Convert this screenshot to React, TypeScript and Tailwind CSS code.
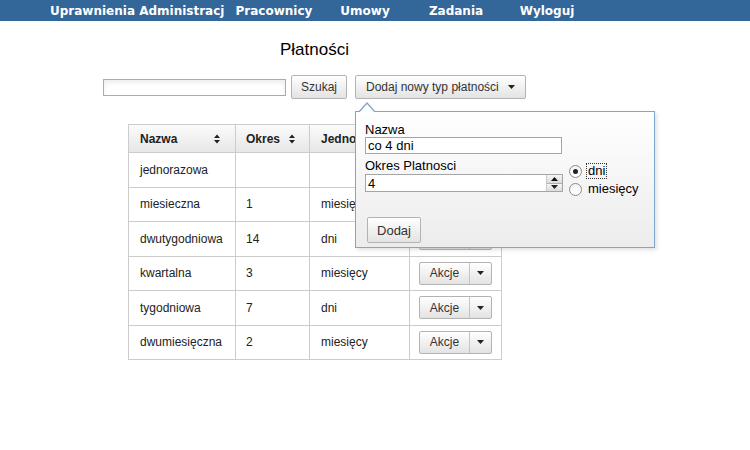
import React from "react";

const rows = [
  { name: "jednorazowa", okres: "", unit: "" },
  { name: "miesieczna", okres: "1", unit: "miesięcy" },
  { name: "dwutygodniowa", okres: "14", unit: "dni" },
  { name: "kwartalna", okres: "3", unit: "miesięcy" },
  { name: "tygodniowa", okres: "7", unit: "dni" },
  { name: "dwumiesięczna", okres: "2", unit: "miesięcy" },
];

const navItems = ["Pracownicy", "Umowy", "Zadania", "Wyloguj"];

const btnClass =
  "border border-[#b3b3b3] rounded-[2px] bg-linear-to-b from-white to-[#e3e3e3] text-[#333] text-[12px] leading-none";

const Caret = () => (
  <svg width="7" height="4" viewBox="0 0 7 4">
    <polygon points="0,0 7,0 3.5,4" fill="#222" />
  </svg>
);

const SortIcon = () => (
  <svg width="6" height="10" viewBox="0 0 6 10">
    <polygon points="0,4 6,4 3,0.5" fill="#222" />
    <polygon points="0,6 6,6 3,9.5" fill="#222" />
  </svg>
);

const Radio = ({ checked }: { checked?: boolean }) => (
  <span className="w-[13px] h-[13px] rounded-full border border-[#8a8a8a] bg-linear-to-b from-[#f4f4f4] to-white flex items-center justify-center shrink-0">
    {checked && <span className="w-[5px] h-[5px] rounded-full bg-[#222]" />}
  </span>
);

const AkcjeBtn = () => (
  <div className={`${btnClass} flex h-[23px] w-[73px]`}>
    <div className="w-[50px] flex items-center justify-center text-[12px] border-r border-[#c4c4c4]">
      Akcje
    </div>
    <div className="flex-1 flex items-center justify-center">
      <Caret />
    </div>
  </div>
);

const Popover = () => (
  <div className="absolute left-0 top-[36px] w-[300px] h-[137px] border border-[#7ea6cf] bg-linear-to-b from-white to-[#ececec] shadow-[2px_2px_4px_rgba(0,0,0,0.12)] z-10 pl-[9px] pt-[10px] text-[13px] text-black font-['Liberation_Sans',Arial,sans-serif] text-left">
    {/* arrow pointing at the button */}
    <div className="absolute -top-[10px] left-[2px] w-0 h-0 border-x-[9px] border-x-transparent border-b-[10px] border-b-[#7ea6cf]" />
    <div className="absolute -top-[8px] left-[3px] w-0 h-0 border-x-[8px] border-x-transparent border-b-[9px] border-b-white" />
    <div className="flex">
      <div className="flex flex-col w-[198px]">
        <div className="leading-[15px]">Nazwa</div>
        <div className="h-[17px] w-[197px] border border-[#a5a5a5] bg-white flex items-center pl-[2px] leading-none">
          co 4 dni
        </div>
        <div className="leading-[15px] mt-[4px]">Okres Platnosci</div>
        <div className="h-[18px] w-[198px] border border-[#a5a5a5] bg-white flex items-center pl-[2px] leading-none mt-[1px]">
          <span className="flex-1">4</span>
          <div className="flex flex-col w-[16px] h-[16px] border-l border-[#c8c8c8]">
            <div className="flex-1 flex items-center justify-center bg-linear-to-b from-[#f6f6f6] to-[#dcdcdc] border-b border-[#b0b0b0]">
              <svg width="7" height="4" viewBox="0 0 7 4">
                <polygon points="0,4 7,4 3.5,0" fill="#111" />
              </svg>
            </div>
            <div className="flex-1 flex items-center justify-center bg-linear-to-b from-[#f6f6f6] to-[#dcdcdc]">
              <Caret />
            </div>
          </div>
        </div>
      </div>
      <div className="flex flex-col ml-[6px] mt-[41px] gap-[2px]">
        <div className="flex items-center h-[16px]">
          <Radio checked />
          <span className="ml-[4px] border border-dotted border-[#333] leading-[14px] px-[1px]">
            dni
          </span>
        </div>
        <div className="flex items-center h-[16px]">
          <Radio />
          <span className="ml-[6px] leading-[14px]">miesięcy</span>
        </div>
      </div>
    </div>
    <button
      className={`${btnClass} mt-[20px] ml-[2px] w-[54px] h-[26px] text-[13px]`}
    >
      Dodaj
    </button>
  </div>
);

export default function App() {
  return (
    <div className="w-[750px] h-[450px] bg-white font-['Liberation_Sans',Arial,sans-serif] text-[#222] overflow-hidden">
      <div className="h-[21px] bg-[#336699] flex items-center pl-[50px] text-white text-[12px] font-bold font-['DejaVu_Sans',Verdana,sans-serif] whitespace-nowrap">
        <div className="w-[175px] overflow-hidden">Uprawnienia Administracji</div>
        <div className="flex ml-[3.5px]">
          {navItems.map((item) => (
            <div key={item} className="w-[91px] text-center">
              {item}
            </div>
          ))}
        </div>
      </div>

      <div className="pl-[280px] mt-[19px] text-[17px] leading-[20px] text-black">
        Płatności
      </div>

      <div className="flex items-center pl-[103px] mt-[15px]">
        <div className="w-[183px] h-[17px] border border-[#ababab] bg-white shadow-[inset_0_3px_4px_rgba(0,0,0,0.07)]" />
        <button className={`${btnClass} ml-[5px] w-[56px] h-[24px]`}>
          Szukaj
        </button>
        <div className="relative ml-[8px]">
          <button
            className={`${btnClass} w-[171px] h-[24px] flex items-center pl-[10px] pr-[10px] justify-between`}
          >
            <span>Dodaj nowy typ płatności</span>
            <Caret />
          </button>
          <Popover />
        </div>
      </div>

      <table className="ml-[128px] mt-[25px] border-collapse text-[12px] text-[#222]">
        <thead>
          <tr className="h-[28px] bg-linear-to-b from-[#fbfbfb] to-[#e6e6e6]">
            <th className="w-[107px] border border-[#cccccc] pl-[11px] pr-[15px] text-left font-bold">
              <div className="flex items-center justify-between">
                <span>Nazwa</span>
                <SortIcon />
              </div>
            </th>
            <th className="w-[74px] border border-[#cccccc] pl-[10px] text-left font-bold">
              <div className="flex items-center gap-[9px]">
                <span>Okres</span>
                <SortIcon />
              </div>
            </th>
            <th className="w-[100px] border border-[#cccccc] pl-[11px] text-left font-bold">
              Jednostka
            </th>
            <th className="w-[92px] border border-[#cccccc]" />
          </tr>
        </thead>
        <tbody>
          {rows.map((r) => (
            <tr key={r.name} className="h-[34.5px]">
              <td className="border border-[#cccccc] pl-[11px]">{r.name}</td>
              <td className="border border-[#cccccc] pl-[10px]">{r.okres}</td>
              <td className="border border-[#cccccc] pl-[11px]">{r.unit}</td>
              <td className="border border-[#cccccc] pl-[9px]">
                <AkcjeBtn />
              </td>
            </tr>
          ))}
        </tbody>
      </table>
    </div>
  );
}
